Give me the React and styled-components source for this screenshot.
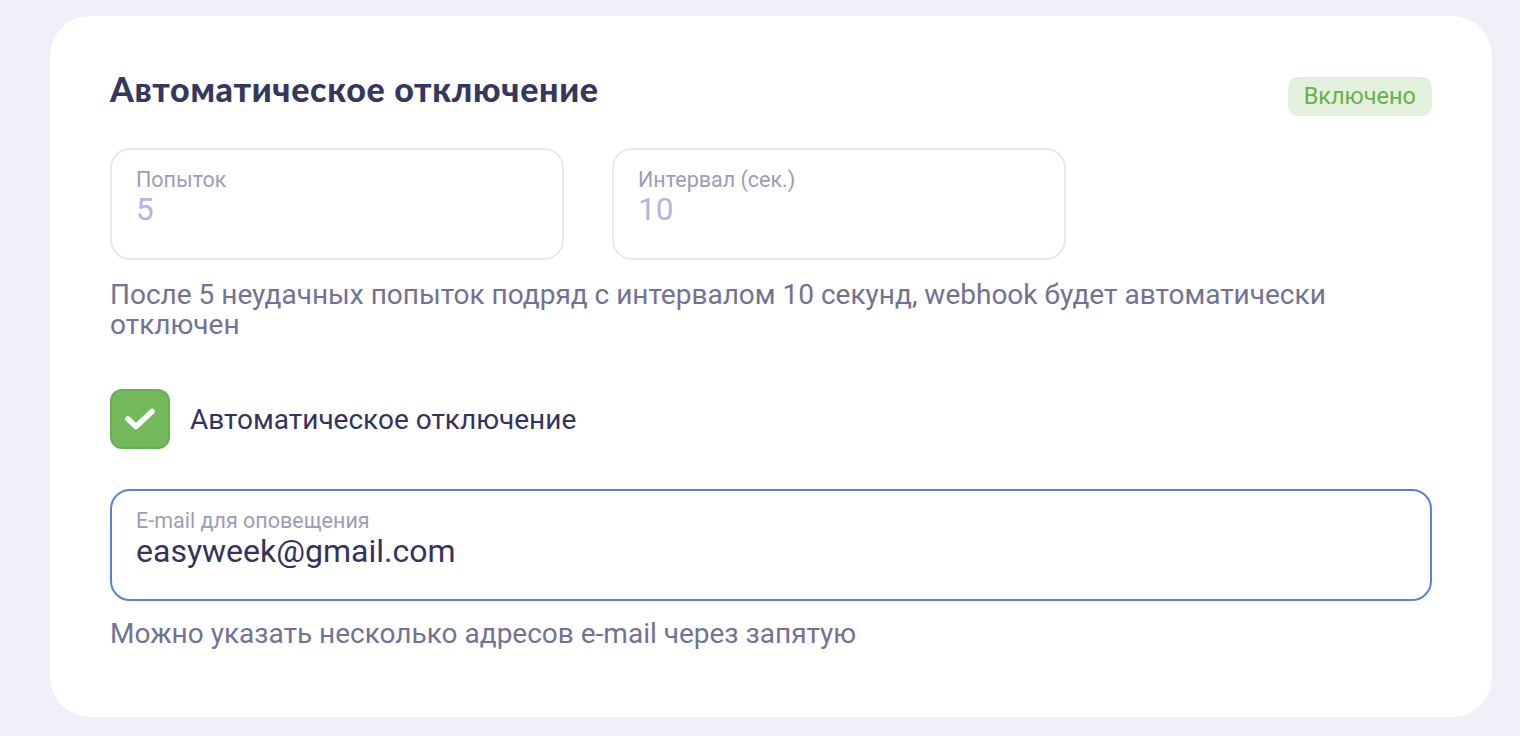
import React from "react";
import styled, { createGlobalStyle } from "styled-components";

const Global = createGlobalStyle`
  html, body { margin: 0; padding: 0; background: #f0f0f9; }
  body { font-family: Roboto, "Noto Sans", sans-serif; }
  * { box-sizing: border-box; }
`;

const Page = styled.div`
  padding: 16px 28px 20px 50px;
  min-height: 736px;
`;

const Card = styled.section`
  background: #ffffff;
  border-radius: 40px;
  padding: 60px 60px 68px 60px;
  display: flex;
  flex-direction: column;
`;

const Header = styled.div`
  display: flex;
  align-items: flex-start;
  justify-content: space-between;
  height: 40px;
`;

const Title = styled.h2`
  margin: 0;
  font-family: Lato, "Noto Sans", sans-serif;
  font-weight: 900;
  font-size: 34px;
  line-height: 26px;
  color: #36375f;
  letter-spacing: 0.7px;
`;

const Badge = styled.span`
  background: #e2f0dc;
  color: #6ab04c;
  font-size: 23.5px;
  padding: 0 16px;
  height: 39px;
  line-height: 39px;
  border-radius: 10px;
  margin-top: 1px;
`;

const FieldsRow = styled.div`
  display: flex;
  gap: 48px;
  margin-top: 32px;
`;

const Field = styled.div`
  width: ${(p) => (p.$full ? "100%" : "454px")};
  height: 112px;
  border: 2px solid ${(p) => (p.$focused ? "#5a82dc" : "#e8e8f0")};
  border-radius: 20px;
  padding: 18px 24px 0 24px;
  display: flex;
  flex-direction: column;
`;

const FieldLabel = styled.span`
  font-size: 21.5px;
  line-height: 24px;
  color: #9d9db6;
`;

const FieldValue = styled.span`
  font-size: ${(p) => (p.$dark ? "32px" : "31.5px")};
  line-height: 36px;
  color: ${(p) => (p.$dark ? "#33335e" : "#b4b4de")};
`;

const Hint = styled.p`
  margin: ${(p) => p.$mt || "20px"} 0 0 0;
  font-size: 28px;
  line-height: 30px;
  color: #727294;
`;

const CheckRow = styled.label`
  display: flex;
  align-items: center;
  gap: 20px;
  margin-top: 49px;
`;

const CheckBox = styled.span`
  width: 60px;
  height: 60px;
  border-radius: 12px;
  background: #74b95b;
  border: 2px solid #6aae52;
  display: flex;
  align-items: center;
  justify-content: center;
`;

const CheckLabel = styled.span`
  font-size: 28px;
  color: #33335e;
`;

const EmailWrap = styled.div`
  margin-top: 40px;
`;

export default function App() {
  return (
    <>
      <Global />
      <Page>
        <Card>
          <Header>
            <Title>Автоматическое отключение</Title>
            <Badge>Включено</Badge>
          </Header>
          <FieldsRow>
            <Field>
              <FieldLabel>Попыток</FieldLabel>
              <FieldValue>5</FieldValue>
            </Field>
            <Field>
              <FieldLabel>Интервал (сек.)</FieldLabel>
              <FieldValue>10</FieldValue>
            </Field>
          </FieldsRow>
          <Hint>
            После 5 неудачных попыток подряд с интервалом 10 секунд, webhook будет автоматически отключен
          </Hint>
          <CheckRow>
            <CheckBox>
              <svg width="32" height="24" viewBox="0 0 32 24" fill="none">
                <path d="M4 12 L12 19.5 L28 4.5" stroke="#fff" strokeWidth="5.5" strokeLinecap="round" strokeLinejoin="round" />
              </svg>
            </CheckBox>
            <CheckLabel>Автоматическое отключение</CheckLabel>
          </CheckRow>
          <EmailWrap>
            <Field $full $focused>
              <FieldLabel>E-mail для оповещения</FieldLabel>
              <FieldValue $dark>easyweek@gmail.com</FieldValue>
            </Field>
          </EmailWrap>
          <Hint $mt="18px">Можно указать несколько адресов e-mail через запятую</Hint>
        </Card>
      </Page>
    </>
  );
}
